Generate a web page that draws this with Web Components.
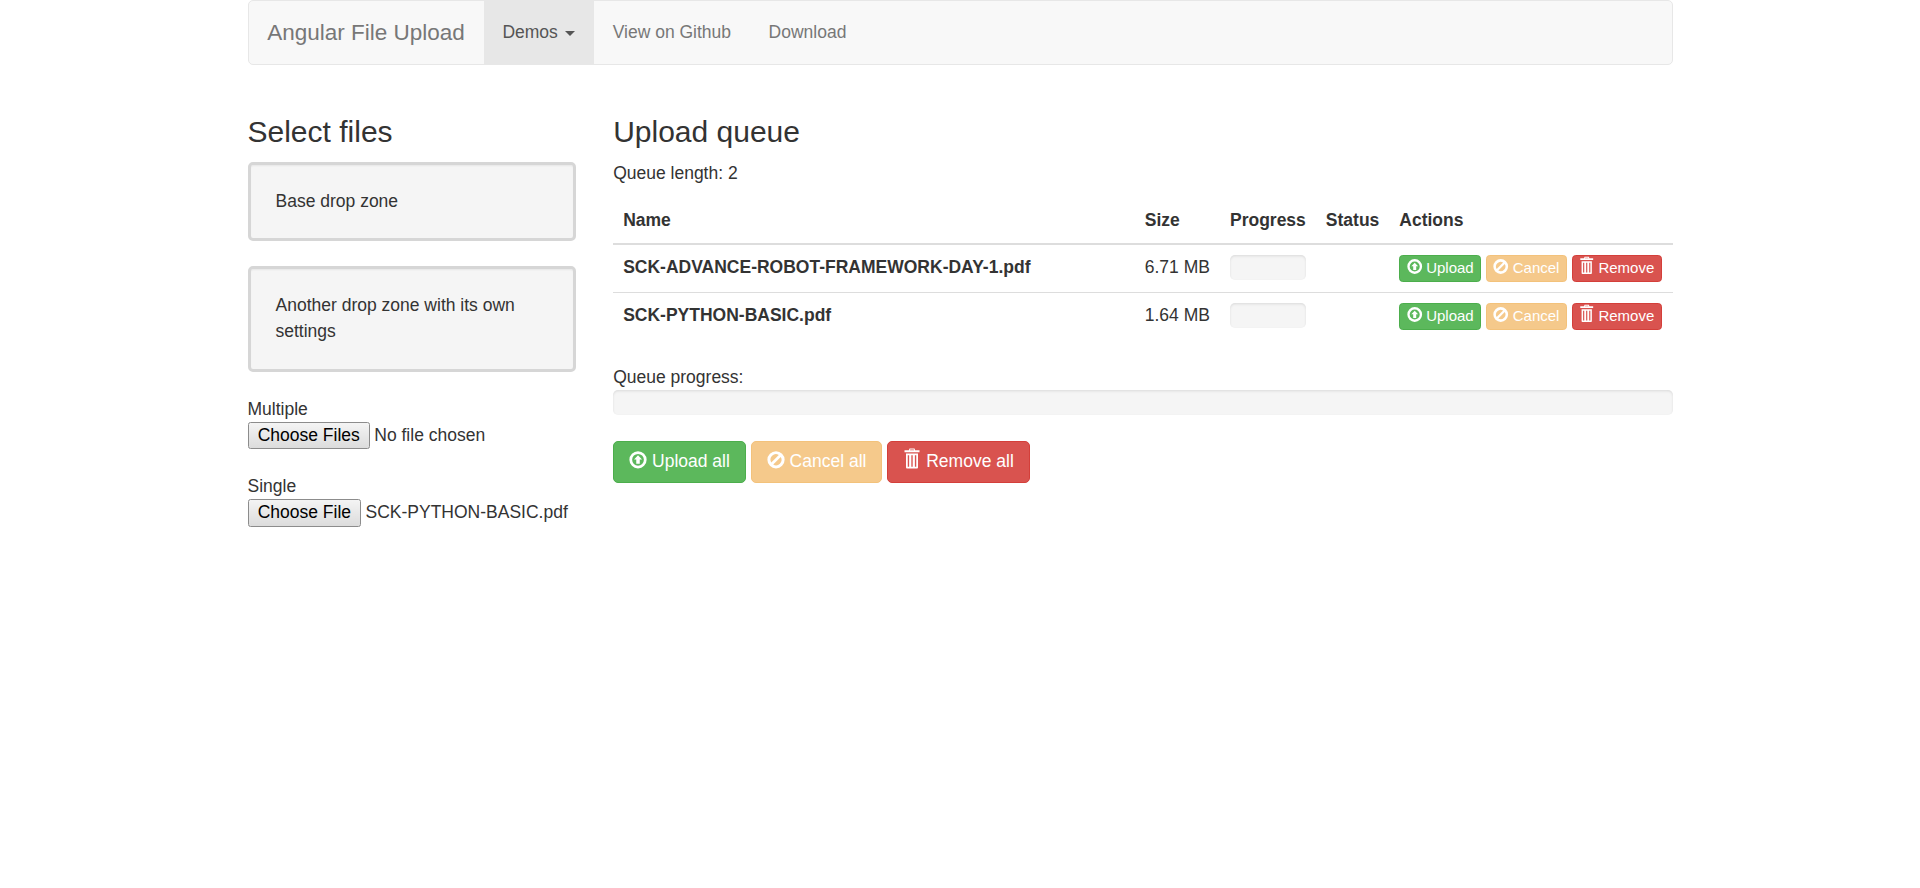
<!DOCTYPE html>
<html lang="en">
<head>
<meta charset="utf-8">
<title>Angular File Upload</title>
<style>
  html, body { margin: 0; padding: 0; background: #fff; }
  body { font: 14px/1.42857 "Liberation Sans", Arial, sans-serif; color: #333; }
</style>
</head>
<body>
<fu-page></fu-page>

<script>
const ICONS = {
  upload: `<svg viewBox="0 0 14 14"><path fill="currentColor" fill-rule="evenodd" d="M7 .1a6.9 6.9 0 1 1 0 13.8A6.9 6.9 0 0 1 7 .1zM7 2.3a4.7 4.7 0 1 0 0 9.4 4.7 4.7 0 0 0 0-9.4zM7 3.4l3.2 3.4H8.4v3.4H5.6V6.8H3.8z"/></svg>`,
  ban: `<svg viewBox="0 0 14 14"><path fill="currentColor" fill-rule="evenodd" d="M7 .1a6.9 6.9 0 1 1 0 13.8A6.9 6.9 0 0 1 7 .1zM3.21 9.23L9.23 3.21A4.4 4.4 0 0 0 3.21 9.23zM4.77 10.79L10.79 4.77A4.4 4.4 0 0 1 4.77 10.79z"/></svg>`,
  trash: `<svg viewBox="0 0 14 14"><path fill="currentColor" fill-rule="evenodd" d="M5-2h4l.5 1.4H13V1H1V-.6h3.5zM5.6-1.2l-.2.6h3.2l-.2-.6zM2.2 2h9.6v11c0 .6-.4 1-1 1H3.2c-.6 0-1-.4-1-1zM3.6 3.4v9.2h1.1V3.4zM6.45 3.4v9.2h1.1V3.4zM9.3 3.4v9.2h1.1V3.4z"/></svg>`
};

class FuIcon extends HTMLElement {
  connectedCallback() {
    this.attachShadow({ mode: 'open' });
    this.shadowRoot.innerHTML = `
      <style>
        :host { display: inline-block; width: 1.03em; height: 1em; line-height: 1; vertical-align: -0.08em; }
        svg { display: block; width: 100%; height: 100%; overflow: visible; }
      </style>
      ${ICONS[this.getAttribute('name')] || ''}
    `;
  }
}

class FuButton extends HTMLElement {
  connectedCallback() {
    this.attachShadow({ mode: 'open' });
    this.shadowRoot.innerHTML = `
      <style>
        :host { display: inline-block; }
        button {
          display: inline-block;
          font: inherit;
          color: #fff;
          border: 1px solid transparent;
          border-radius: 4px;
          padding: 6px 12px;
          font-size: 14px;
          line-height: 1.42857;
          white-space: nowrap;
          margin: 0;
        }
        :host([size="xs"]) button { padding: 1px 5px; font-size: 12px; line-height: 1.5; border-radius: 3px; }
        :host([kind="success"]) button { background: #5cb85c; border-color: #4cae4c; }
        :host([kind="warning"]) button { background: #f0ad4e; border-color: #eea236; opacity: .65; }
        :host([kind="danger"]) button { background: #d9534f; border-color: #d43f3a; }
      </style>
      <button type="button"><fu-icon name="${this.getAttribute('icon')}"></fu-icon> <slot></slot></button>
    `;
  }
}

class FuNavbar extends HTMLElement {
  connectedCallback() {
    this.attachShadow({ mode: 'open' });
    this.shadowRoot.innerHTML = `
      <style>
        :host {
          display: flex;
          min-height: 50px;
          margin-bottom: 20px;
          background: #f8f8f8;
          border: 1px solid #e7e7e7;
          border-radius: 4px;
        }
        a { display: block; padding: 15px; line-height: 20px; color: #777; text-decoration: none; }
        .brand { font-size: 18px; }
        .open { background: #e7e7e7; color: #555; }
        .caret {
          display: inline-block;
          width: 0; height: 0;
          margin-left: 2px;
          vertical-align: middle;
          border-top: 4px solid;
          border-left: 4px solid transparent;
          border-right: 4px solid transparent;
        }
      </style>
      <a class="brand" href="#">Angular File Upload</a>
      <a class="open" href="#">Demos <span class="caret"></span></a>
      <a href="#">View on Github</a>
      <a href="#">Download</a>
    `;
  }
}

class FuDropZone extends HTMLElement {
  connectedCallback() {
    this.attachShadow({ mode: 'open' });
    this.shadowRoot.innerHTML = `
      <style>
        :host {
          display: block;
          min-height: 20px;
          padding: 18px 19px 19.5px 20px;
          line-height: 21px;
          margin-bottom: 20px;
          background: #f5f5f5;
          border: 3px solid #d6d6d6;
          border-radius: 4px;
          box-shadow: inset 0 1px 1px rgba(0,0,0,.05);
        }
      </style>
      <slot></slot>
    `;
  }
}

class FuFilePicker extends HTMLElement {
  connectedCallback() {
    this.attachShadow({ mode: 'open' });
    this.shadowRoot.innerHTML = `
      <style>
        :host { display: block; }
        .label { line-height: 20px; }
        .row { display: flex; align-items: center; gap: 3.5px; }
        button {
          font: inherit;
          line-height: 16px;
          color: #000;
          height: 22px;
          padding: 0 7.3px 1px;
          margin: 0;
          background: linear-gradient(#f4f4f4, #dcdcdc);
          border: 1px solid #8c8c8c;
          border-radius: 2px;
          white-space: nowrap;
        }
      </style>
      <div class="label">${this.getAttribute('label')}</div>
      <div class="row"><button type="button">${this.getAttribute('button')}</button><span><slot></slot></span></div>
    `;
  }
}

class FuProgress extends HTMLElement {
  connectedCallback() {
    this.attachShadow({ mode: 'open' });
    this.shadowRoot.innerHTML = `
      <style>
        :host {
          display: block;
          height: 20px;
          background: #f5f5f5;
          border-radius: 4px;
          box-shadow: inset 0 1px 2px rgba(0,0,0,.1);
        }
      </style>
    `;
  }
}

class FuQueueRow extends HTMLElement {
  connectedCallback() {
    this.attachShadow({ mode: 'open' });
    this.shadowRoot.innerHTML = `
      <style>
        :host { display: table-row; }
        .cell { display: table-cell; padding: 8px; border-top: 1px solid #ddd; vertical-align: top; white-space: nowrap; }
        .name { font-weight: bold; white-space: normal; }
        .actions { padding-right: 8.8px; }
      </style>
      <div class="cell name">${this.getAttribute('name')}</div>
      <div class="cell">${this.getAttribute('size')}</div>
      <div class="cell"><fu-progress></fu-progress></div>
      <div class="cell"></div>
      <div class="cell actions">
        <fu-button kind="success" size="xs" icon="upload">Upload</fu-button>
        <fu-button kind="warning" size="xs" icon="ban">Cancel</fu-button>
        <fu-button kind="danger" size="xs" icon="trash">Remove</fu-button>
      </div>
    `;
  }
}

class FuQueueTable extends HTMLElement {
  connectedCallback() {
    this.attachShadow({ mode: 'open' });
    this.shadowRoot.innerHTML = `
      <style>
        :host { display: table; width: 100%; margin-bottom: 20px; border-collapse: collapse; }
        .head { display: table-row; font-weight: bold; }
        .head div { display: table-cell; padding: 8px; border-bottom: 2px solid #ddd; }
        .head div:first-child { width: 50%; }
      </style>
      <div class="head"><div>Name</div><div>Size</div><div>Progress</div><div>Status</div><div>Actions</div></div>
      <slot></slot>
    `;
  }
}

class FuPage extends HTMLElement {
  connectedCallback() {
    this.attachShadow({ mode: 'open' });
    this.shadowRoot.innerHTML = `
      <style>
        :host { display: block; zoom: 1.25; }
        .container { width: 1140px; margin: 0 auto; }
        .row { display: flex; gap: 30px; }
        .side { flex: 0 0 262.5px; }
        .main { flex: 1 1 0; min-width: 0; }
        h3 { font-size: 24px; font-weight: 500; line-height: 1.1; margin: 20px 0 11px; }
        .side h3 { margin-bottom: 11.6px; }
        p { margin: 0 0 9.2px; }
        .gap { height: 20px; }
        .queue-bar { margin-bottom: 20.8px; }
      </style>
      <div class="container">
        <fu-navbar></fu-navbar>
        <div class="row">
          <div class="side">
            <h3>Select files</h3>
            <fu-drop-zone>Base drop zone</fu-drop-zone>
            <fu-drop-zone>Another drop zone with its own settings</fu-drop-zone>
            <fu-file-picker label="Multiple" button="Choose Files">No file chosen</fu-file-picker>
            <div class="gap"></div>
            <fu-file-picker label="Single" button="Choose File">SCK-PYTHON-BASIC.pdf</fu-file-picker>
          </div>
          <div class="main">
            <h3>Upload queue</h3>
            <p>Queue length: 2</p>
            <fu-queue-table>
              <fu-queue-row name="SCK-ADVANCE-ROBOT-FRAMEWORK-DAY-1.pdf" size="6.71 MB"></fu-queue-row>
              <fu-queue-row name="SCK-PYTHON-BASIC.pdf" size="1.64 MB"></fu-queue-row>
            </fu-queue-table>
            <div>Queue progress:</div>
            <fu-progress class="queue-bar"></fu-progress>
            <fu-button kind="success" icon="upload">Upload all</fu-button>
            <fu-button kind="warning" icon="ban">Cancel all</fu-button>
            <fu-button kind="danger" icon="trash">Remove all</fu-button>
          </div>
        </div>
      </div>
    `;
  }
}

customElements.define('fu-icon', FuIcon);
customElements.define('fu-button', FuButton);
customElements.define('fu-navbar', FuNavbar);
customElements.define('fu-drop-zone', FuDropZone);
customElements.define('fu-file-picker', FuFilePicker);
customElements.define('fu-progress', FuProgress);
customElements.define('fu-queue-row', FuQueueRow);
customElements.define('fu-queue-table', FuQueueTable);
customElements.define('fu-page', FuPage);
</script>
</body>
</html>
